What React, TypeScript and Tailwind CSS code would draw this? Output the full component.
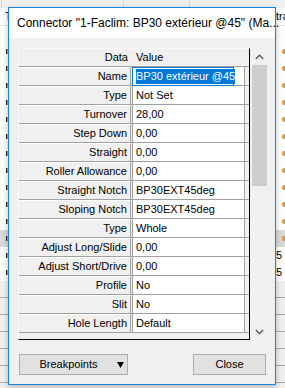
import React from "react";

const rows: [string, string][] = [
  ["Name", "BP30 extérieur @45"],
  ["Type", "Not Set"],
  ["Turnover", "28,00"],
  ["Step Down", "0,00"],
  ["Straight", "0,00"],
  ["Roller Allowance", "0,00"],
  ["Straight Notch", "BP30EXT45deg"],
  ["Sloping Notch", "BP30EXT45deg"],
  ["Type", "Whole"],
  ["Adjust Long/Slide", "0,00"],
  ["Adjust Short/Drive", "0,00"],
  ["Profile", "No"],
  ["Slit", "No"],
  ["Hole Length", "Default"],
];

// rows of the list view that sits behind the dialog
const listRows = Array.from({ length: 15 }, (_, i) => i);
const lowerRows = Array.from({ length: 7 }, (_, i) => i);

function Chevron({ up }: { up?: boolean }) {
  return (
    <svg width="9" height="6" viewBox="0 0 9 6">
      <polyline
        points={up ? "0.8,5 4.5,1.3 8.2,5" : "0.8,1 4.5,4.7 8.2,1"}
        fill="none"
        stroke="#606060"
        strokeWidth="1.6"
      />
    </svg>
  );
}

function Background() {
  return (
    <div className="flex flex-col w-[285px] h-[388px] bg-[#f0f0f0]">
      {/* top strip of the app behind */}
      <div className="flex h-[8px] shrink-0 bg-[#f0f0f0]">
        <div className="w-[1px]" />
        <div className="w-[122px] border-l border-[#d6d6d6]" />
        <div className="w-[66px] border-l border-[#d6d6d6]" />
        <div className="flex-1 border-l border-[#d6d6d6]" />
      </div>
      {/* column header */}
      <div className="flex h-[18px] shrink-0 bg-white border-b border-[#e3e3e3] text-[11px] text-black items-center">
        <span className="pl-[5px]">T</span>
        <span className="ml-auto w-[9px] overflow-hidden whitespace-nowrap">trans</span>
      </div>
      {/* list rows with icons */}
      <div className="flex flex-col bg-white">
        {listRows.map((i) => (
          <div
            key={i}
            className={
              i === 12
                ? "flex h-[17px] items-center justify-between bg-[#d9d9d9]"
                : "flex h-[17px] items-center justify-between"
            }
          >
            <div className="w-[8px] flex justify-end">
              {i > 0 && <div className="w-[2px] h-[5px] bg-[#222] border-r border-[#e0a040]" />}
            </div>
            {i >= 13 ? (
              <span className="w-[9px] text-[11px] text-black leading-none">5</span>
            ) : (
              <div className="w-[9px] flex justify-end">
                {i > 0 && <div className="w-[3px] h-[5px] rounded-l-[2px] bg-[#e69a2e]" />}
              </div>
            )}
          </div>
        ))}
      </div>
      {/* lower grey rows */}
      <div className="flex flex-col">
        {lowerRows.map((i) => (
          <div key={i} className="h-[17px] border-b border-[#a9a9a9]" />
        ))}
      </div>
    </div>
  );
}

function PropertyGrid() {
  return (
    <div className="w-[232px] h-[292px] border-t border-l border-[#f8f8f8] border-r border-b border-r-black border-b-black bg-[#f0f0f0] flex flex-col">
      <div className="flex h-[18px] shrink-0 items-center border-b border-[#a0a0a0]">
        <div className="w-[112px] text-right pr-[3px]">Data</div>
        <div className="pl-[5px]">Value</div>
      </div>
      {rows.map(([label, value], i) => (
        <div key={i} className="flex h-[19px] shrink-0 border-b border-[#a0a0a0]">
          <div className="w-[112px] border-r border-[#a0a0a0] border-t border-t-white text-right pr-[3px] flex items-center justify-end">
            {label}
          </div>
          <div className="ml-[1px] w-[113px] bg-white border-l border-r border-[#a0a0a0] flex items-center">
            {i === 0 ? (
              <div className="w-[102px] h-[19px] -ml-[1px] mb-[-1px] border border-[#0078d7] bg-white flex items-center pl-[3px]">
                <span className="bg-[#0078d7] text-white leading-[15px] whitespace-nowrap">{value}</span>
              </div>
            ) : (
              <span className="pl-[3px] whitespace-nowrap">{value}</span>
            )}
          </div>
        </div>
      ))}
    </div>
  );
}

function ScrollBar() {
  return (
    <div className="w-[18px] h-[292px] flex flex-col items-center">
      <div className="h-[17px] flex items-center justify-center">
        <Chevron up />
      </div>
      <div className="w-[15px] h-[121px] bg-[#cdcdcd]" />
      <div className="flex-1" />
      <div className="h-[17px] flex items-center justify-center">
        <Chevron />
      </div>
    </div>
  );
}

export default function App() {
  return (
    <div className="relative w-[285px] h-[388px] overflow-hidden font-['Liberation_Sans',Arial,sans-serif] text-[11px] text-black">
      <Background />
      {/* the dialog window over the app */}
      <div className="absolute left-[8px] top-[7px] w-[268px] h-[378px] border border-[#1883d7] bg-[#f0f0f0] flex flex-col shadow-[0_2px_6px_rgba(0,0,0,0.25)]">
        <div className="h-[30px] shrink-0 bg-white flex items-center pl-[8px] text-[12px] whitespace-nowrap">
          Connector "1-Faclim: BP30 extérieur @45" (Ma...
        </div>
        <div className="flex flex-col pl-[9px] pt-[10px]">
          <div className="flex">
            <PropertyGrid />
            <ScrollBar />
          </div>
          <div className="flex mt-[14px] pl-[1px]">
            <button className="w-[109px] h-[21px] border border-[#adadad] bg-[#e1e1e1] flex items-center">
              <span className="w-[97px] text-center">Breakpoints</span>
              <svg width="7" height="6" viewBox="0 0 7 6">
                <polygon points="0,0 7,0 3.5,6" fill="#000" />
              </svg>
            </button>
            <button className="ml-[65px] w-[73px] h-[21px] border border-[#adadad] bg-[#e1e1e1] flex items-center justify-center">
              Close
            </button>
          </div>
        </div>
      </div>
    </div>
  );
}
